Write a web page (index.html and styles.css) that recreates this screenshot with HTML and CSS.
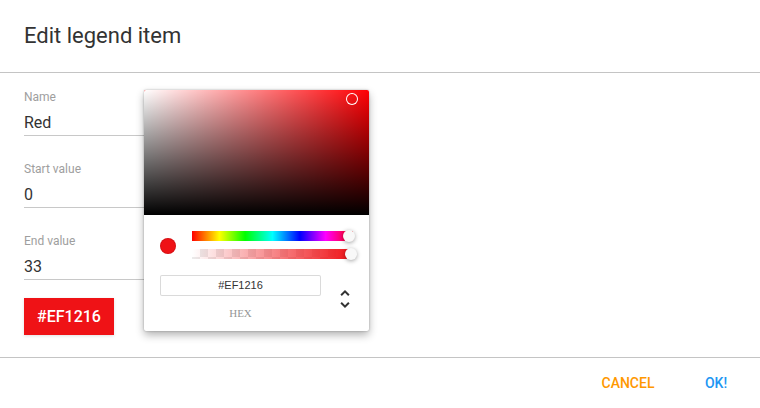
FILE: index.html
```html
<!DOCTYPE html>
<html lang="en">
<head>
    <meta charset="UTF-8">
    <meta name="viewport" content="width=device-width, initial-scale=1.0">
    <title>Edit legend item</title>
    <link rel="stylesheet" href="styles.css">
</head>
<body>
    <div class="dialog">
        <h3 class="dialog-title">Edit legend item</h3>

        <div class="dialog-body">
            <div class="fields">
                <div class="field">
                    <label class="field-label">Name</label>
                    <div class="field-input">Red</div>
                </div>
                <div class="field">
                    <label class="field-label">Start value</label>
                    <div class="field-input">0</div>
                </div>
                <div class="field">
                    <label class="field-label">End value</label>
                    <div class="field-input">33</div>
                </div>
            </div>
            <button class="color-btn" type="button">#EF1216</button>

            <!-- colour picker popover, sits over the form -->
            <div class="picker">
                <div class="saturation">
                    <div class="sat-white"></div>
                    <div class="sat-black"></div>
                    <div class="sat-pointer"></div>
                </div>
                <div class="picker-body">
                    <div class="controls">
                        <div class="swatch-col">
                            <div class="swatch"></div>
                        </div>
                        <div class="toggles">
                            <div class="bar hue">
                                <div class="thumb" style="left: 99%;"></div>
                            </div>
                            <div class="bar alpha">
                                <div class="alpha-fill"></div>
                                <div class="thumb" style="left: 100%;"></div>
                            </div>
                        </div>
                    </div>
                    <div class="picker-fields">
                        <div class="hex-wrap">
                            <div class="hex-input">#EF1216</div>
                            <span class="hex-label">hex</span>
                        </div>
                        <div class="toggle">
                            <svg viewBox="0 0 24 24" width="24" height="24">
                                <path fill="#333" d="M12,18.17L8.83,15L7.42,16.41L12,21L16.59,16.41L15.17,15M12,5.83L15.17,9L16.58,7.59L12,3L7.41,7.59L8.83,9L12,5.83Z"/>
                            </svg>
                        </div>
                    </div>
                </div>
            </div>
        </div>

        <div class="dialog-actions">
            <button class="flat-btn cancel" type="button">Cancel</button>
            <button class="flat-btn ok" type="button">OK!</button>
        </div>
    </div>
</body>
</html>
```

FILE: styles.css
```css
body {
    margin: 0;
    padding: 0;
    background: #fff;
    font-family: Roboto, "Liberation Sans", Arial, sans-serif;
    color: #333;
}

.dialog {
    width: 760px;
}

.dialog-title {
    margin: 0;
    padding: 22px 24px;
    font-size: 22px;
    line-height: 28px;
    font-weight: 400;
    color: #333;
    border-bottom: 1px solid #c4c4c4;
}

.dialog-body {
    position: relative;
    padding: 17px 24px 22px;
    border-bottom: 1px solid #c4c4c4;
}

.fields {
    display: flex;
    flex-direction: column;
    gap: 26px;
}

.field {
    width: 256px;
    display: flex;
    flex-direction: column;
}

.field-label {
    font-size: 12px;
    line-height: 14px;
    color: #9e9e9e;
}

.field-input {
    margin-top: 7px;
    font-size: 16px;
    line-height: 24px;
    color: #333;
    border-bottom: 1px solid #c8c8c8;
}

.color-btn {
    display: block;
    margin-top: 18px;
    width: 90px;
    height: 37px;
    border: none;
    border-radius: 0;
    background: #ef1216;
    color: #fff;
    font-family: Roboto, "Liberation Sans", sans-serif;
    font-size: 16px;
    font-weight: 500;
    padding: 0;
    box-shadow: 0 1px 3px rgba(0, 0, 0, 0.12);
}

/* picker */
.picker {
    position: absolute;
    left: 144px;
    top: 17px;
    width: 225px;
    background: #fff;
    border-radius: 2px;
    box-shadow: 0 0 2px rgba(0, 0, 0, .3), 0 4px 8px rgba(0, 0, 0, .3);
    font-family: "Liberation Serif", serif;
}

.saturation {
    position: relative;
    height: 125px;
    background: hsl(359, 100%, 50%);
    border-radius: 2px 2px 0 0;
    overflow: hidden;
}

.sat-white,
.sat-black {
    position: absolute;
    inset: 0;
}

.sat-white {
    background: linear-gradient(to right, #fff, rgba(255, 255, 255, 0));
}

.sat-black {
    background: linear-gradient(to top, #000, rgba(0, 0, 0, 0));
}

.sat-pointer {
    position: absolute;
    left: 208px;
    top: 9px;
    width: 12px;
    height: 12px;
    border-radius: 6px;
    box-shadow: inset 0 0 0 1px #fff;
    transform: translate(-6px, -6px);
}

.picker-body {
    padding: 16px 16px 12px;
}

.controls {
    display: flex;
}

.swatch-col {
    width: 32px;
}

.swatch {
    margin-top: 7px;
    width: 16px;
    height: 16px;
    border-radius: 8px;
    background: #ef1216;
    box-shadow: inset 0 0 0 1px rgba(0, 0, 0, .1);
}

.toggles {
    flex: 1;
}

.bar {
    position: relative;
    height: 10px;
}

.hue {
    margin-bottom: 8px;
    background: linear-gradient(to right, #f00 0%, #ff0 17%, #0f0 33%, #0ff 50%, #00f 67%, #f0f 83%, #f00 100%);
}

.alpha {
    background-color: #fff;
    background-image: repeating-conic-gradient(rgba(0, 0, 0, .08) 0 25%, #fff 0 50%);
    background-size: 16px 16px;
}

.alpha-fill {
    position: absolute;
    inset: 0;
    background: linear-gradient(to right, rgba(239, 18, 22, 0), rgb(239, 18, 22));
}

.thumb {
    position: absolute;
    top: 0;
    width: 12px;
    height: 12px;
    border-radius: 6px;
    background: #f8f8f8;
    box-shadow: 0 1px 4px 0 rgba(0, 0, 0, .37);
    transform: translate(-8px, -1px);
}

.picker-fields {
    display: flex;
    padding-top: 16px;
}

.hex-wrap {
    flex: 1;
}

.hex-input {
    height: 21px;
    line-height: 21px;
    border-radius: 2px;
    box-shadow: inset 0 0 0 1px #dadada;
    font-family: "Liberation Sans", Arial, sans-serif;
    font-size: 11px;
    color: #333;
    text-align: center;
}

.hex-label {
    display: block;
    margin-top: 12px;
    font-size: 11px;
    line-height: 11px;
    color: #969696;
    text-align: center;
    text-transform: uppercase;
}

.toggle {
    width: 32px;
    text-align: right;
}

.toggle svg {
    margin-top: 12px;
    margin-right: -4px;
}

/* actions */
.dialog-actions {
    display: flex;
    justify-content: flex-end;
    padding-top: 7px;
    height: 43px;
}

.flat-btn {
    width: 88px;
    height: 36px;
    border: none;
    background: none;
    padding: 0;
    font-family: Roboto, "Liberation Sans", sans-serif;
    font-size: 14px;
    font-weight: 500;
    text-transform: uppercase;
    line-height: 36px;
}

.cancel {
    color: #ff9800;
}

.ok {
    color: #2196f3;
}
```
